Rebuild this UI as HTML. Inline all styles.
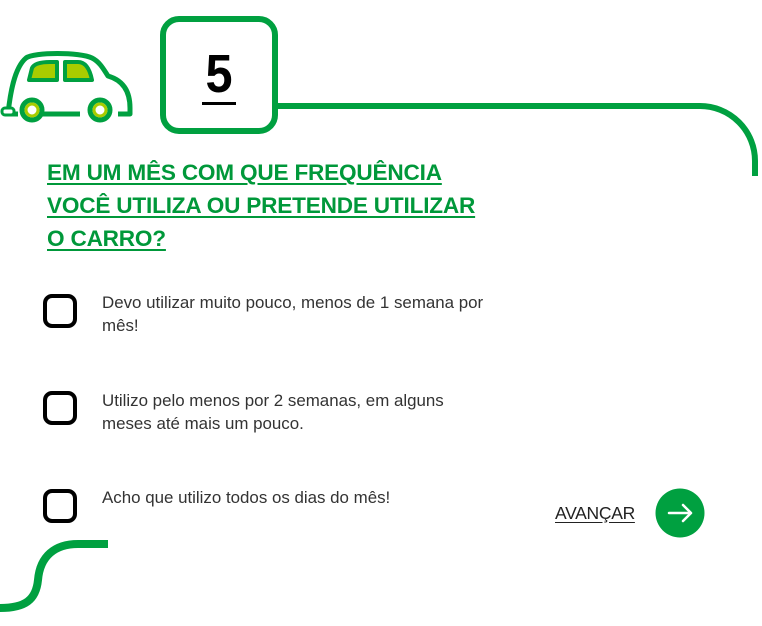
<!DOCTYPE html>
<html><head><meta charset="utf-8"><style>
body{margin:0;width:762px;height:626px;background:#fff;position:relative;overflow:hidden;font-family:"Liberation Sans",sans-serif}
.h{position:absolute;left:47px;top:156px;color:#00983a;font-weight:bold;font-size:22.6px;line-height:33px;text-decoration:underline;text-underline-offset:3px;letter-spacing:-0.2px}
.cb{position:absolute;left:43px;width:26px;height:26px;border:4.5px solid #000;border-radius:9px}
.t{position:absolute;left:102px;color:#333;font-size:16.9px;line-height:23px;font-weight:300;width:420px}
</style></head><body>
<svg width="762" height="626" style="position:absolute;left:0;top:0">
<path d="M278 106 H700 A55 55 0 0 1 755 161 V176" fill="none" stroke="#00a040" stroke-width="6"/>
<rect x="163" y="19" width="112" height="112" rx="16" fill="none" stroke="#00a040" stroke-width="6"/>
<text x="219" y="92" text-anchor="middle" font-family="Liberation Sans" font-weight="bold" font-size="54" transform="translate(219 0) scale(0.9 1) translate(-219 0)">5</text>
<rect x="202" y="102" width="34" height="3" fill="#000"/>
<path d="M108 544 H78 C55 544 40 556 38 580 C36 600 25 608 0 608" fill="none" stroke="#00a040" stroke-width="8"/>
<g fill="none" stroke="#00a040" stroke-width="5" stroke-linejoin="round">
<path d="M8 114 C10 95 14 68 26 58 C34 52 80 52 92 58 C100 62 104 70 108 76 C122 80 130 90 130 108 V114 H118 M80 114 H40 M18 114 H8"/>
<path d="M29 80 L32 68 C34 64 40 62 50 62 H57 V80 Z" fill="#a8cc00" stroke-width="4"/>
<path d="M65 62 H78 C86 62 90 70 92 80 H65 Z" fill="#a8cc00" stroke-width="4"/>
</g>
<circle cx="32" cy="110" r="10" fill="#fff" stroke="#00a040" stroke-width="5"/>
<circle cx="32" cy="110" r="6" fill="#fff" stroke="#a8cc00" stroke-width="3"/>
<circle cx="100" cy="110" r="10" fill="#fff" stroke="#00a040" stroke-width="5"/>
<circle cx="100" cy="110" r="6" fill="#fff" stroke="#a8cc00" stroke-width="3"/>
<rect x="2" y="108" width="12" height="7" rx="3" fill="#fff" stroke="#00a040" stroke-width="3"/>
<circle cx="680" cy="513" r="24.5" fill="#00a040"/>
<path d="M669 513 H691 M683 505 L691 513 L683 521" fill="none" stroke="#fff" stroke-width="2.5" stroke-linecap="round" stroke-linejoin="round"/>
</svg>
<div class="h">EM UM MÊS COM QUE FREQUÊNCIA<br>VOCÊ UTILIZA OU PRETENDE UTILIZAR<br>O CARRO?</div>
<div class="cb" style="top:294px"></div>
<div class="t" style="top:291px">Devo utilizar muito pouco, menos de 1 semana por<br>mês!</div>
<div class="cb" style="top:391px"></div>
<div class="t" style="top:389px">Utilizo pelo menos por 2 semanas, em alguns<br>meses até mais um pouco.</div>
<div class="cb" style="top:489px"></div>
<div class="t" style="top:486px">Acho que utilizo todos os dias do mês!</div>
<div style="position:absolute;left:555px;top:503px;font-size:17.5px;color:#222;text-decoration:underline;text-underline-offset:3px;letter-spacing:-0.3px">AVANÇAR</div>
</body></html>
